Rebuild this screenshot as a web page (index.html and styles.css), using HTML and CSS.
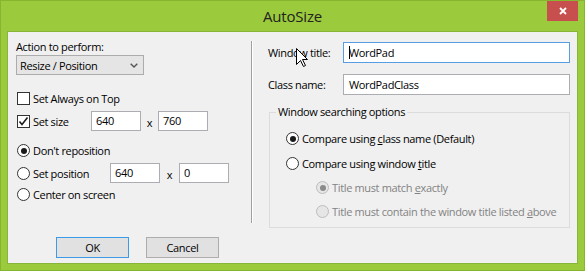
FILE: index.html
```html
<!DOCTYPE html>
<html lang="en">
<head>
  <meta charset="UTF-8" />
  <title>AutoSize</title>
  <link rel="stylesheet" href="styles.css">
</head>
<body>

  <div class="window">
    <div class="titlebar">
      <span class="title">AutoSize</span>
      <div class="close">
        <svg width="8" height="8" viewBox="0 0 8 8"><path d="M1 1L7 7M7 1L1 7" stroke="#fff" stroke-width="1.8"/></svg>
      </div>
    </div>

    <div class="client">
      <!-- left side: action -->
      <div class="left">
        <div class="label">Action to perform:</div>
        <div class="select">
          <span>Resize / Position</span>
          <svg width="8" height="5" viewBox="0 0 8 5"><path d="M0.7 0.7L4 4L7.3 0.7" fill="none" stroke="#555" stroke-width="1.4"/></svg>
        </div>

        <div class="row first">
          <label class="opt"><span class="box"></span><span>Set Always on Top</span></label>
        </div>
        <div class="row tall">
          <label class="opt w-size">
            <span class="box"><svg width="11" height="11" viewBox="0 0 11 11"><path d="M1.5 5.5L4 8.5L9.5 1.5" fill="none" stroke="#1a1a1a" stroke-width="1.6"/></svg></span><span>Set size</span>
          </label>
          <div class="field">640</div>
          <span class="by">x</span>
          <div class="field">760</div>
        </div>

        <div class="row radio-first">
          <label class="opt"><span class="radio on"></span><span>Don't reposition</span></label>
        </div>
        <div class="row tall">
          <label class="opt w-pos"><span class="radio"></span><span>Set position</span></label>
          <div class="field">640</div>
          <span class="by wide">x</span>
          <div class="field">0</div>
        </div>
        <div class="row last">
          <label class="opt"><span class="radio"></span><span>Center on screen</span></label>
        </div>

        <div class="buttons">
          <div class="btn default">OK</div>
          <div class="btn">Cancel</div>
        </div>
      </div>

      <div class="sep"></div>

      <!-- right side: window matching -->
      <div class="right">
        <div class="frow">
          <span class="flabel">Window title:</span>
          <div class="text focus"><span class="caret"></span>WordPad</div>
        </div>
        <div class="frow">
          <span class="flabel">Class name:</span>
          <div class="text">WordPadClass</div>
        </div>

        <fieldset class="group">
          <legend>Window searching options</legend>
          <div class="grow g1"><span class="radio on"></span><span>Compare using <u>c</u>lass name (Default)</span></div>
          <div class="grow g2"><span class="radio"></span><span>Compare using window <u>t</u>itle</span></div>
          <div class="grow sub g3 disabled"><span class="radio on"></span><span>Title must match <u>e</u>xactly</span></div>
          <div class="grow sub g3 disabled"><span class="radio"></span><span>Title must contain the window title listed <u>a</u>bove</span></div>
        </fieldset>
      </div>
    </div>

    <svg class="cursor" width="13" height="20" viewBox="0 0 13 20">
      <path d="M0.5 0.5V16.5L4.5 12.5L7.5 18.5L9.5 17.5L6.5 11.5H11.5Z" fill="#fff" stroke="#000" stroke-width="1" stroke-linejoin="miter"/>
    </svg>
  </div>

</body>
</html>
```

FILE: styles.css
```css
body {
  margin: 0;
  font-family: "Open Sans", sans-serif;
  font-size: 11px;
  letter-spacing: -0.35px;
  color: #000;
}

.window {
  position: relative;
  width: 585px;
  height: 271px;
  box-sizing: border-box;
  background-color: #9bcb3c;
  border: 1px solid #86b52f;
  padding: 0 6px 6px;
}

.titlebar {
  height: 30px;
  display: grid;
  grid-template-columns: 31px 1fr 31px;
}

.title {
  grid-column: 2;
  text-align: center;
  line-height: 30px;
  font-size: 15px;
  letter-spacing: -0.2px;
  color: #222;
}

.close {
  grid-column: 3;
  height: 20px;
  background-color: #c7504f;
  display: flex;
  align-items: center;
  justify-content: center;
}

.client {
  height: 233px;
  box-sizing: border-box;
  border: 1px solid #88b63a;
  background-color: #f0f0f0;
  display: flex;
}

/* left */
.left {
  width: 243px;
  box-sizing: border-box;
  padding: 8px 0 0 8px;
}

.label {
  line-height: 14px;
}

.select {
  margin-top: 1px;
  width: 128px;
  height: 20px;
  box-sizing: border-box;
  border: 1px solid #acacac;
  background-color: #e5e5e5;
  display: flex;
  align-items: center;
  justify-content: space-between;
  padding: 0 5px 0 3px;
}

.row {
  display: flex;
  align-items: center;
  height: 13px;
}

.row.tall {
  height: 20px;
  margin-top: 6px;
}

.row.first {
  margin-top: 17px;
}

.row.radio-first {
  margin-top: 13px;
}

.row.last {
  margin-top: 5px;
}

.opt {
  display: flex;
  align-items: center;
  gap: 3px;
  padding-left: 1px;
  white-space: nowrap;
}

.w-size {
  width: 75px;
  box-sizing: border-box;
}

.w-pos {
  width: 94px;
  box-sizing: border-box;
}

.box {
  width: 13px;
  height: 13px;
  box-sizing: border-box;
  border: 1px solid #333;
  background-color: #fff;
  display: flex;
  align-items: center;
  justify-content: center;
}

.radio {
  width: 13px;
  height: 13px;
  flex: none;
  box-sizing: border-box;
  border: 1px solid #333;
  border-radius: 50%;
  background-color: #fff;
  display: flex;
  align-items: center;
  justify-content: center;
}

.radio.on::after {
  content: "";
  width: 6px;
  height: 6px;
  border-radius: 50%;
  background-color: #1a1a1a;
}

.field {
  width: 50px;
  height: 20px;
  box-sizing: border-box;
  border: 1px solid #abadb3;
  background-color: #fff;
  padding-left: 4px;
  line-height: 18px;
}

.by {
  width: 17px;
  text-align: center;
  padding-top: 3px;
}

.by.wide {
  width: 19px;
}

.buttons {
  display: flex;
  gap: 17px;
  margin-top: 36px;
  padding-left: 40px;
}

.btn {
  width: 73px;
  height: 21px;
  box-sizing: border-box;
  border: 1px solid #adadad;
  background-color: #e1e1e1;
  text-align: center;
  line-height: 19px;
}

.btn.default {
  border-color: #3c9be8;
}

.sep {
  margin-top: 9px;
  height: 182px;
  width: 0;
  border-left: 1px solid #a0a0a0;
  border-right: 1px solid #fff;
}

/* right */
.right {
  padding: 10px 0 0 15px;
}

.frow {
  display: flex;
  align-items: center;
  height: 21px;
}

.frow + .frow {
  margin-top: 11px;
}

.flabel {
  width: 75px;
}

.text {
  width: 227px;
  height: 21px;
  box-sizing: border-box;
  border: 1px solid #abadb3;
  background-color: #fff;
  padding-left: 5px;
  line-height: 19px;
  display: flex;
  align-items: center;
}

.text.focus {
  border-color: #569de5;
}

.caret {
  width: 1px;
  height: 13px;
  background-color: #000;
  margin-right: -1px;
}

.group {
  margin: 10px 0 0 1px;
  width: 301px;
  box-sizing: border-box;
  border: 1px solid #dcdcdc;
  padding: 0 0 9px 6px;
}

.group legend {
  padding: 0 2px;
  line-height: 14px;
}

.grow {
  display: flex;
  align-items: center;
  gap: 3px;
  height: 13px;
  margin-left: 10px;
  white-space: nowrap;
}

.grow.g1 {
  margin-top: 13px;
}

.grow.g2 {
  margin-top: 12px;
}

.grow.g3 {
  margin-top: 11px;
}

.grow.sub {
  margin-left: 40px;
}

.disabled {
  color: #838383;
}

.disabled .radio {
  border-color: #bcbcbc;
  background-color: #e6e6e6;
}

.disabled .radio.on::after {
  background-color: #8a8a8a;
}

.cursor {
  position: absolute;
  left: 295px;
  top: 47px;
}
```
